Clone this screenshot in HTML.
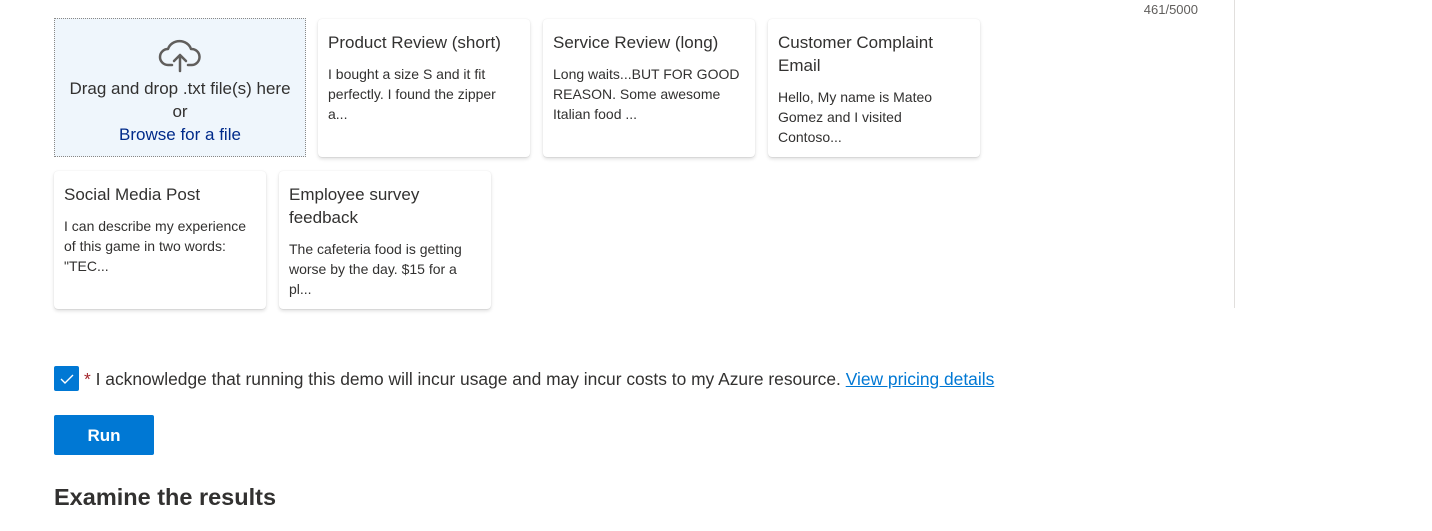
<!DOCTYPE html>
<html><head><style>
body{margin:0;width:1432px;height:531px;background:#fff;font-family:"Liberation Sans",sans-serif;color:#323130;position:relative;overflow:hidden}
.a{position:absolute}
.card{position:absolute;width:212px;height:138px;background:#fff;border-radius:4px;box-shadow:0 1.6px 3.6px rgba(0,0,0,.13),0 0.3px 0.9px rgba(0,0,0,.11);box-sizing:border-box;padding:12px 10px 10px 10px}
.card .t{font-size:17px;line-height:23px;color:#323130}
.card .b{font-size:14px;line-height:20px;color:#323130;margin-top:10px;white-space:nowrap}
</style></head><body>
<div class="a" style="right:234px;top:2px;font-size:13px;color:#605e5c">461/5000</div>
<div class="a" style="left:1234px;top:0;width:1px;height:308px;background:#e1dfdd"></div>
<div class="a" style="left:54px;top:18px;width:252px;height:139px;box-sizing:border-box;border:1px dotted #8a8886;background:#eff6fc;text-align:center;font-size:17px;line-height:23px">
<svg style="margin-top:20px;display:block;margin-left:auto;margin-right:auto" width="46" height="34" viewBox="0 0 46 34" fill="none" stroke="#605e5c" stroke-width="2.5" stroke-linecap="round" stroke-linejoin="round"><path d="M15 26H11a8 8 0 0 1 0-16 12 11 0 0 1 23 0 8 8 0 0 1 1 16h-4"/><path d="M23 32V17M17 22l6-6 6 6"/></svg>
<div style="margin-top:4px">Drag and drop .txt file(s) here</div><div>or</div><div style="color:#002a8a">Browse for a file</div></div>
<div class="card" style="left:318px;top:19px"><div class="t">Product Review (short)</div><div class="b">I bought a size S and it fit<br>perfectly. I found the zipper<br>a...</div></div>
<div class="card" style="left:543px;top:19px"><div class="t">Service Review (long)</div><div class="b">Long waits...BUT FOR GOOD<br>REASON. Some awesome<br>Italian food ...</div></div>
<div class="card" style="left:768px;top:19px"><div class="t">Customer Complaint<br>Email</div><div class="b">Hello, My name is Mateo<br>Gomez and I visited<br>Contoso...</div></div>
<div class="card" style="left:54px;top:171px"><div class="t">Social Media Post</div><div class="b">I can describe my experience<br>of this game in two words:<br>"TEC...</div></div>
<div class="card" style="left:279px;top:171px"><div class="t">Employee survey<br>feedback</div><div class="b">The cafeteria food is getting<br>worse by the day. $15 for a<br>pl...</div></div>
<div class="a" style="left:54px;top:366px;width:25px;height:25px;background:#0078d4;border-radius:2px"><svg width="25" height="25" viewBox="0 0 25 25"><path d="M7 13l4 4 8-8" fill="none" stroke="#fff" stroke-width="1.4"/></svg></div>
<div class="a" style="left:84px;top:369px;font-size:17.4px;white-space:nowrap"><span style="color:#a4262c">*</span> I acknowledge that running this demo will incur usage and may incur costs to my Azure resource. <span style="color:#0078d4;text-decoration:underline">View pricing details</span></div>
<div class="a" style="left:54px;top:415px;width:100px;height:40px;background:#0078d4;border-radius:2px;color:#fff;font-weight:bold;font-size:17px;line-height:42px;text-align:center">Run</div>
<div class="a" style="left:54px;top:484px;font-size:23.5px;font-weight:bold;color:#323130">Examine the results</div>
</body></html>
